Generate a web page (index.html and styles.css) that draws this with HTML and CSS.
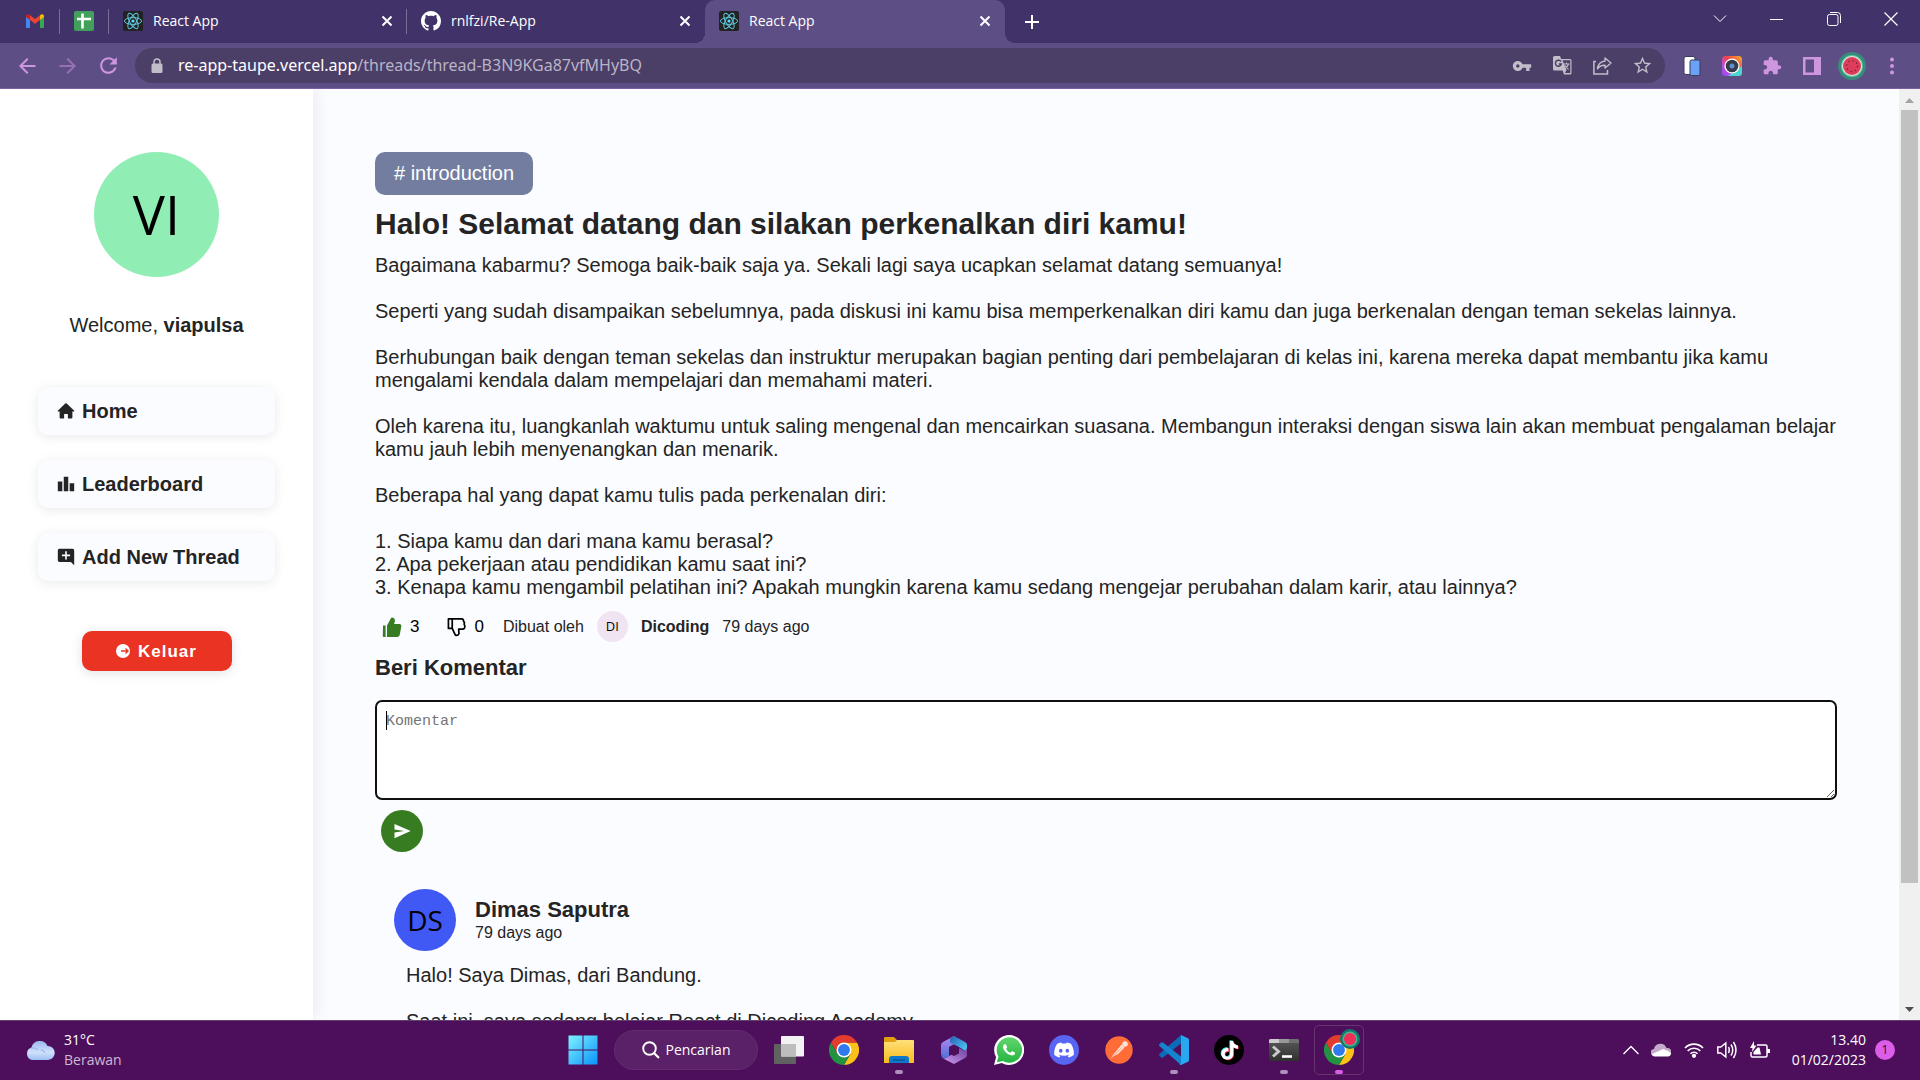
FILE: index.html
```html
<!DOCTYPE html>
<html lang="id">
<head>
<meta charset="utf-8">
<title>React App</title>
<link rel="stylesheet" href="styles.css">
</head>
<body>
<svg class="defs" aria-hidden="true">
  <defs>
    <symbol id="react" viewBox="0 0 20 20">
      <rect width="20" height="20" rx="2" fill="#222"/>
      <g fill="none" stroke="#61c5dc" stroke-width="1">
        <ellipse cx="10" cy="10" rx="8.6" ry="3.4"/>
        <ellipse cx="10" cy="10" rx="8.6" ry="3.4" transform="rotate(60 10 10)"/>
        <ellipse cx="10" cy="10" rx="8.6" ry="3.4" transform="rotate(120 10 10)"/>
      </g>
      <circle cx="10" cy="10" r="1.6" fill="#61dafb"/>
    </symbol>
    <symbol id="close" viewBox="0 0 16 16">
      <path d="M3.5 3.5l9 9M12.5 3.5l-9 9" stroke="#fff" stroke-width="2" fill="none"/>
    </symbol>
    <symbol id="chrome" viewBox="0 0 48 48">
      <path d="M24 12h20.8A24 24 0 0 1 24 48l10.4-18z" fill="#fbc116"/>
      <path d="M3.2 12A24 24 0 0 0 24 48l10.4-18L24 35 13.6 30z" fill="#229342"/>
      <path d="M3.2 12A24 24 0 0 1 44.8 12H24L13.6 30z" fill="#e33b2e"/>
      <circle cx="24" cy="24" r="12" fill="#fff"/>
      <circle cx="24" cy="24" r="9.5" fill="#2f7bee"/>
    </symbol>
    <symbol id="note" viewBox="0 0 24 24">
      <path d="M12.525.02c1.31-.02 2.61-.01 3.91-.02.08 1.53.63 3.09 1.75 4.17 1.12 1.11 2.7 1.62 4.24 1.79v4.03c-1.44-.05-2.89-.35-4.2-.97-.57-.26-1.1-.59-1.62-.93-.01 2.92.01 5.84-.02 8.75-.08 1.4-.54 2.79-1.35 3.94-1.31 1.92-3.58 3.17-5.91 3.21-1.43.08-2.86-.31-4.08-1.03-2.02-1.19-3.44-3.37-3.65-5.71-.02-.5-.03-1-.01-1.49.18-1.9 1.12-3.72 2.58-4.96 1.66-1.44 3.98-2.13 6.15-1.72.02 1.48-.04 2.96-.04 4.44-.99-.32-2.15-.23-3.02.37-.63.41-1.11 1.04-1.36 1.75-.21.51-.15 1.07-.14 1.61.24 1.64 1.82 3.02 3.5 2.87 1.12-.01 2.19-.66 2.77-1.61.19-.33.4-.67.41-1.06.1-1.79.06-3.57.07-5.36.01-4.03-.01-8.05.02-12.07z"/>
    </symbol>
    <linearGradient id="winBlue" x1="0" y1="0" x2="1" y2="1"><stop offset="0" stop-color="#7df4ff"/><stop offset="1" stop-color="#0a92fa"/></linearGradient>
    <linearGradient id="folder" x1="0" y1="0" x2="0" y2="1"><stop offset="0" stop-color="#ffe07a"/><stop offset="1" stop-color="#f9bb1c"/></linearGradient>
    <linearGradient id="wa" x1="0" y1="0" x2="0" y2="1"><stop offset="0" stop-color="#61d66d"/><stop offset="1" stop-color="#25b440"/></linearGradient>
    <linearGradient id="cloud" x1="0" y1="0" x2="0" y2="1"><stop offset="0" stop-color="#9db9f2"/><stop offset=".6" stop-color="#cfe0fb"/><stop offset="1" stop-color="#9dbff2"/></linearGradient>
    <linearGradient id="m1" x1="0" y1="0" x2="0" y2="1"><stop offset="0" stop-color="#b78af0"/><stop offset="1" stop-color="#4a6fd8"/></linearGradient>
    <linearGradient id="m2" x1="0" y1="0" x2="1" y2="1"><stop offset="0" stop-color="#2a5fb5"/><stop offset="1" stop-color="#4fd3fb"/></linearGradient>
    <linearGradient id="m3" x1="0" y1="1" x2="1" y2="0"><stop offset="0" stop-color="#cf9cf5"/><stop offset="1" stop-color="#6a3f98"/></linearGradient>
    <linearGradient id="term" x1="0" y1="0" x2="0" y2="1"><stop offset="0" stop-color="#5a5a5a"/><stop offset="1" stop-color="#303030"/></linearGradient>
    <linearGradient id="rain" x1="0" y1="1" x2="1" y2="0"><stop offset="0" stop-color="#8a4cf5"/><stop offset=".3" stop-color="#c44ce0"/><stop offset=".6" stop-color="#ef4444"/><stop offset="1" stop-color="#f7b52c"/></linearGradient>
  </defs>
</svg>

<header class="browser">
  <div class="tabstrip">
    <a class="tab tab-pinned" href="#" aria-label="Gmail">
      <svg width="18" height="14" viewBox="0 0 18 14"><path d="M0 2v11q0 1 1 1h3V5z" fill="#4285f4"/><path d="M18 2v11q0 1-1 1h-3V5z" fill="#34a853"/><path d="M14 1.200V6l4-3V1.500Q16.500-.6 14 1.200z" fill="#fbbc04"/><path d="M4 1.200V6L0 3V1.500Q1.500-.6 4 1.200z" fill="#c5221f"/><path d="M4 1.200L9 5l5-3.800V6L9 9.800 4 6z" fill="#ea4335"/></svg>
    </a>
    <a class="tab tab-pinned" href="#" aria-label="Spreadsheet">
      <svg width="20" height="20" viewBox="0 0 20 20"><rect width="20" height="20" rx="2" fill="#43a05a"/><path d="M8.500 2.500v15M3 8h14" stroke="#fff" stroke-width="2.600"/></svg>
    </a>
    <div class="tab">
      <svg width="20" height="20"><use href="#react"/></svg>
      <span class="tab-title">React App</span>
      <button class="tab-close" aria-label="Close tab"><svg width="16" height="16"><use href="#close"/></svg></button>
    </div>
    <div class="tab tab-before-active">
      <svg width="20" height="20" viewBox="0 0 16 16" fill="#fff"><path d="M8 0C3.580 0 0 3.580 0 8c0 3.540 2.290 6.530 5.470 7.590.4.070.550-.170.550-.380 0-.190-.010-.820-.010-1.490-2.010.370-2.530-.490-2.690-.940-.090-.230-.480-.940-.820-1.130-.280-.150-.680-.520-.010-.530.630-.010 1.080.580 1.230.820.720 1.210 1.870.870 2.330.660.070-.520.280-.870.510-1.070-1.780-.2-3.640-.890-3.640-3.950 0-.870.310-1.590.820-2.150-.080-.2-.360-1.020.080-2.120 0 0 .670-.210 2.200.820.640-.180 1.320-.270 2-.270s1.360.090 2 .270c1.530-1.040 2.200-.820 2.200-.820.440 1.100.160 1.920.080 2.120.510.560.820 1.270.820 2.150 0 3.070-1.870 3.750-3.650 3.950.290.250.540.730.540 1.480 0 1.070-.010 1.930-.010 2.200 0 .210.150.460.550.380A8.010 8.010 0 0 0 16 8c0-4.420-3.580-8-8-8z"/></svg>
      <span class="tab-title">rnlfzi/Re-App</span>
      <button class="tab-close" aria-label="Close tab"><svg width="16" height="16"><use href="#close"/></svg></button>
    </div>
    <div class="tab tab-active">
      <svg width="20" height="20"><use href="#react"/></svg>
      <span class="tab-title">React App</span>
      <button class="tab-close" aria-label="Close tab"><svg width="16" height="16"><use href="#close"/></svg></button>
    </div>
    <button class="new-tab" aria-label="New tab"><svg width="16" height="16" viewBox="0 0 16 16"><path d="M8 1v14M1 8h14" stroke="#fff" stroke-width="2"/></svg></button>
    <div class="window-controls">
      <button aria-label="Search tabs"><svg width="14" height="14" viewBox="0 0 14 14"><path d="M1 3.500l6 6 6-6" stroke="#fff" fill="none"/></svg></button>
      <button aria-label="Minimize"><svg width="14" height="14" viewBox="0 0 14 14"><path d="M0 7.500h13" stroke="#fff"/></svg></button>
      <button aria-label="Restore"><svg width="14" height="14" viewBox="0 0 14 14"><rect x=".5" y="2.500" width="10.500" height="11" rx="2" stroke="#fff" fill="none"/><path d="M3 .5h7.500q3 0 3 3V11" stroke="#fff" fill="none"/></svg></button>
      <button aria-label="Close"><svg width="14" height="14" viewBox="0 0 14 14"><path d="M.5.500l13 13M13.500.500l-13 13" stroke="#fff" stroke-width="1.200"/></svg></button>
    </div>
  </div>

  <div class="toolbar">
    <button class="nav-btn" aria-label="Back"><svg width="24" height="24" viewBox="0 0 24 24" fill="#cf96e0"><path d="M20.500 11H7.830l5.590-5.590L12 4l-8 8 8 8 1.410-1.410L7.830 13H20.500v-2z"/></svg></button>
    <button class="nav-btn nav-off" aria-label="Forward"><svg width="24" height="24" viewBox="0 0 24 24" fill="#cf96e0"><path d="M3.500 11h12.670l-5.590-5.590L12 4l8 8-8 8-1.410-1.410L16.170 13H3.500v-2z"/></svg></button>
    <button class="nav-btn" aria-label="Reload"><svg width="25" height="25" viewBox="0 0 24 24" fill="#cf96e0"><path d="M17.650 6.350C16.200 4.900 14.210 4 12 4c-4.420 0-7.990 3.580-7.990 8s3.570 8 7.990 8c3.730 0 6.840-2.550 7.730-6h-2.080c-.820 2.330-3.040 4-5.650 4-3.310 0-6-2.690-6-6s2.690-6 6-6c1.660 0 3.140.690 4.220 1.780L13 11h7V4l-2.350 2.350z"/></svg></button>
    <div class="omnibox">
      <svg width="12" height="15" viewBox="0 0 12 15"><path d="M3 6V4a3 3 0 0 1 6 0v2" stroke="#c1bdc9" stroke-width="1.500" fill="none"/><rect x=".5" y="5.500" width="11" height="9.500" rx="1.500" fill="#c1bdc9"/></svg>
      <div class="url" role="textbox" aria-label="Address" contenteditable="true" spellcheck="false"><span class="url-host">re-app-taupe.vercel.app</span>/threads/thread-B3N9KGa87vfMHyBQ</div>
      <button aria-label="Passwords"><svg width="20" height="20" viewBox="0 0 24 24" fill="#c1bdc9"><path d="M12.650 10C11.830 7.670 9.610 6 7 6c-3.310 0-6 2.690-6 6s2.690 6 6 6c2.610 0 4.830-1.670 5.650-4H17v4h4v-4h2v-4H12.650zM7 14c-1.100 0-2-.9-2-2s.9-2 2-2 2 .9 2 2-.9 2-2 2z"/></svg></button>
      <button aria-label="Translate"><svg width="19" height="19" viewBox="0 0 19 19"><path d="M1.500 0H7l1.200 3H17q1.500 0 1.500 1.500V17q0 1.500-1.500 1.500h-6L9.600 14.500H1.500Q0 14.500 0 13V1.500Q0 0 1.500 0z" fill="#c1bdc9"/><path d="M9.500 4.200H17.300V17H12l1.500-3z" fill="#4b3e67"/><path d="M8 5.700A3 3 0 1 0 8.300 8H5.800" fill="none" stroke="#4b3e67" stroke-width="1.400"/><path d="M10.500 8h6M13.500 6.500V8M15.500 8q-.8 3-4 5M12 9.500l3.500 4" fill="none" stroke="#c1bdc9" stroke-width="1.100"/></svg></button>
      <button aria-label="Share"><svg width="19" height="18" viewBox="0 0 19 18"><path d="M3 4.500H.9V17.100H14.500V13" fill="none" stroke="#c1bdc9" stroke-width="1.500"/><path d="M12 1l6 5-6 5V8.200Q7 8 4.500 12 5 5 12 4z" fill="none" stroke="#c1bdc9" stroke-width="1.400" stroke-linejoin="round"/></svg></button>
      <button aria-label="Bookmark"><svg width="21" height="21" viewBox="0 0 24 24" fill="#c1bdc9"><path d="M22 9.240l-7.190-.620L12 2 9.190 8.630 2 9.240l5.460 4.730L5.820 21 12 17.270 18.180 21l-1.630-7.030L22 9.240zM12 15.400l-3.760 2.270 1-4.280-3.320-2.880 4.380-.380L12 6.100l1.710 4.040 4.380.380-3.320 2.880 1 4.280L12 15.400z"/></svg></button>
    </div>
    <div class="extensions">
      <button aria-label="Responsive viewer"><svg width="18" height="20" viewBox="0 0 18 20"><rect x="1" y=".5" width="11" height="18" rx="2" fill="#fff" stroke="#3b3b5a"/><rect x="7" y="4" width="10" height="15.500" rx="1.500" fill="#6aa2f7" stroke="#3b3b5a"/></svg></button>
      <button aria-label="Screenshot"><svg width="20" height="20" viewBox="0 0 20 20"><rect width="20" height="20" rx="3.500" fill="url(#rain)"/><path d="M20 10v6.500Q20 20 16.500 20H6z" fill="#4cd6d0"/><circle cx="10" cy="10" r="7.600" fill="#fff"/><circle cx="10" cy="10" r="6.300" fill="#363b45"/><circle cx="10" cy="10" r="2.500" fill="#5d8fd0"/></svg></button>
      <button aria-label="Extensions"><svg width="20" height="20" viewBox="0 0 24 24" fill="#cf96e0"><path d="M20.500 11H19V7c0-1.100-.9-2-2-2h-4V3.500C13 2.120 11.880 1 10.500 1S8 2.120 8 3.500V5H4c-1.100 0-1.990.9-1.990 2v3.800H3.500c1.490 0 2.700 1.210 2.700 2.700s-1.210 2.700-2.700 2.700H2V20c0 1.100.9 2 2 2h3.800v-1.500c0-1.490 1.210-2.700 2.700-2.700 1.490 0 2.700 1.210 2.700 2.700V22H17c1.100 0 2-.9 2-2v-4h1.500c1.380 0 2.500-1.120 2.500-2.500S21.880 11 20.500 11z"/></svg></button>
      <button aria-label="Side panel"><svg width="18" height="18" viewBox="0 0 18 18"><path d="M0 0h18v18H0zM2.500 2.500v13H11v-13z" fill="#cf96e0" fill-rule="evenodd"/></svg></button>
      <button aria-label="Profile"><svg width="28" height="28" viewBox="0 0 28 28"><circle cx="14" cy="14" r="14" fill="#3a8a7c"/><circle cx="14" cy="14" r="11" fill="#57c9a4"/><circle cx="14" cy="14" r="10" fill="#f3e6d8"/><circle cx="14" cy="14" r="9" fill="#dc3d5c"/><circle cx="14" cy="14" r="5.500" fill="none" stroke="#6b2236" stroke-width="1.300" stroke-dasharray="1.300 3"/></svg></button>
      <button aria-label="Menu"><svg width="4" height="18" viewBox="0 0 4 18" fill="#cf96e0"><circle cx="2" cy="2.500" r="2"/><circle cx="2" cy="9" r="2"/><circle cx="2" cy="15.500" r="2"/></svg></button>
    </div>
  </div>
</header>

<div class="page">
  <aside class="sidebar">
    <div class="avatar avatar-lg">VI</div>
    <p class="welcome">Welcome, <strong>viapulsa</strong></p>
    <nav class="menu">
      <a href="#"><svg width="18" height="18" viewBox="0 0 24 24"><path d="M12 1.500q.6 0 1 .4l10 9.600q.6 1-.5 1H20.500V20.500q0 1.500-1.500 1.500H14.500v-6h-5v6H5q-1.500 0-1.500-1.500v-8H1.500q-1.100 0-.5-1L11 1.900q.4-.4 1-.4z"/></svg>Home</a>
      <a href="#"><svg width="18" height="18" viewBox="1 1 22 22"><path d="M7.500 21H2V9h5.500v12zm7.250-18h-5.500v18h5.500V3zM22 11h-5.500v10H22V11z"/></svg>Leaderboard</a>
      <a href="#"><svg width="18" height="18" viewBox="1 1 22 22"><path d="M22 4c0-1.100-.9-2-2-2H4c-1.100 0-2 .9-2 2v12c0 1.100.9 2 2 2h14l4 4V4zm-5 7h-4v4h-2v-4H7V9h4V5h2v4h4v2z"/></svg>Add New Thread</a>
    </nav>
    <button class="logout"><svg width="14" height="14" viewBox="0 0 14 14"><circle cx="7" cy="7" r="7" fill="#fff"/><path d="M5 7h7M9.500 4.500L12 7 9.500 9.500" stroke="#ea3323" stroke-width="1.400" fill="none"/></svg>Keluar</button>
  </aside>

  <main class="content">
    <span class="tag"># introduction</span>
    <h1>Halo! Selamat datang dan silakan perkenalkan diri kamu!</h1>
    <div class="body-text">
      <p>Bagaimana kabarmu? Semoga baik-baik saja ya. Sekali lagi saya ucapkan selamat datang semuanya!</p>
      <p>Seperti yang sudah disampaikan sebelumnya, pada diskusi ini kamu bisa memperkenalkan diri kamu dan juga berkenalan dengan teman sekelas lainnya.</p>
      <p>Berhubungan baik dengan teman sekelas dan instruktur merupakan bagian penting dari pembelajaran di kelas ini, karena mereka dapat membantu jika kamu mengalami kendala dalam mempelajari dan memahami materi.</p>
      <p>Oleh karena itu, luangkanlah waktumu untuk saling mengenal dan mencairkan suasana. Membangun interaksi dengan siswa lain akan membuat pengalaman belajar kamu jauh lebih menyenangkan dan menarik.</p>
      <p>Beberapa hal yang dapat kamu tulis pada perkenalan diri:</p>
      <p>1. Siapa kamu dan dari mana kamu berasal?<br>2. Apa pekerjaan atau pendidikan kamu saat ini?<br>3. Kenapa kamu mengambil pelatihan ini? Apakah mungkin karena kamu sedang mengejar perubahan dalam karir, atau lainnya?</p>
    </div>
    <div class="thread-meta">
      <div class="votes">
        <button class="vote"><svg width="20" height="20" viewBox="0 0 20 20" fill="#387c22"><path d="M1 8.500h2.600V20H1.500Q.8 20 .8 19z"/><path d="M5 8.500L8.400 2.200Q8.600.500 10.200.500q3.400.3 2.500 4.500l-.6 2H18q1.800.5 1.300 2.600l-1.600 8.300Q17.200 19.500 15.500 20H5z"/></svg>3</button>
        <button class="vote"><svg width="19" height="20" viewBox="0 0 20 20" fill="none" stroke="#000" stroke-width="1.800" stroke-linejoin="round"><path d="M1.500 1.500H15.500q2 .3 1.800 2l1 2-.2 1.700.8 2.300q-.2 2.500-2 2.800H12.300l.3 4.700q-.5 2-2.500 1.900-1.300 0-1.800-1.400L5.500 11.500h-4z"/><path d="M5.500 1.500v10"/></svg>0</button>
      </div>
      <span class="meta-text">Dibuat oleh</span>
      <span class="avatar avatar-sm">DI</span>
      <strong class="meta-text">Dicoding</strong>
      <span class="meta-text">79 days ago</span>
    </div>
    <form class="comment-form">
      <h2><label for="comment">Beri Komentar</label></h2>
      <div class="field">
        <textarea id="comment" placeholder="Komentar"></textarea>
        <span class="caret"></span>
      </div>
      <button class="send" type="button" aria-label="Kirim"><svg width="18" height="18" viewBox="0 0 24 24" fill="#fff"><path d="M2 21.500L23.500 12 2 2.500V10l13 2-13 2z"/></svg></button>
    </form>
    <article class="comment">
      <header class="comment-head">
        <div class="avatar avatar-md">DS</div>
        <div>
          <h3>Dimas Saputra</h3>
          <p class="meta-text">79 days ago</p>
        </div>
      </header>
      <div class="comment-body body-text">
        <p>Halo! Saya Dimas, dari Bandung.</p>
        <p>Saat ini, saya sedang belajar React di Dicoding Academy.</p>
      </div>
    </article>
  </main>

  <div class="scrollbar">
    <svg width="21" height="21" viewBox="0 0 21 21"><path d="M6 14l4.500-5 4.500 5z" fill="#a3a3a3"/></svg>
    <div class="scroll-track"><div class="scroll-thumb"></div></div>
    <svg width="21" height="21" viewBox="0 0 21 21"><path d="M6 8h9l-4.500 5z" fill="#505050"/></svg>
  </div>
</div>

<footer class="taskbar">
  <div class="weather">
    <svg width="30" height="20" viewBox="0 0 30 20"><path d="M7 20a6.500 6.500 0 0 1-.5-12.500A8.500 8.500 0 0 1 22.500 6 7 7 0 0 1 23 20z" fill="url(#cloud)"/><path d="M6 8q4-1 7 2M20 13q-1-3-4-3" stroke="#8fb0ea" fill="none"/></svg>
    <div><div>31°C</div><div class="weather-sub">Berawan</div></div>
  </div>
  <div class="apps">
    <button class="app" aria-label="Start"><svg width="30" height="30" viewBox="0 0 30 30" fill="url(#winBlue)"><path d="M.5.500h14v14H.5zM15.500.500h14v14h-14zM.5 15.500h14v14H.5zM15.500 15.500h14v14h-14z"/></svg></button>
    <button class="search"><svg width="18" height="18" viewBox="0 0 18 18"><circle cx="7.500" cy="7.500" r="6.300" stroke="#fff" stroke-width="1.900" fill="none"/><path d="M12 12l5 5" stroke="#fff" stroke-width="2.200"/></svg>Pencarian</button>
    <button class="app" aria-label="Task view"><svg width="30" height="28" viewBox="0 0 30 28"><rect y="8" width="22" height="20" rx="1" fill="#616161"/><rect x="7" width="23" height="20.500" rx="1" fill="#f2f2f2"/><rect x="7" y="8" width="15" height="12.500" fill="#bdbdbd"/></svg></button>
    <button class="app" aria-label="Chrome"><svg width="30" height="30"><use href="#chrome"/></svg></button>
    <button class="app running" aria-label="File Explorer"><svg width="30" height="28" viewBox="0 0 30 28"><path d="M0 2q0-1 1-1h9l3 3H28q2 0 2 2v6H0z" fill="#e0a010"/><path d="M0 6h11l2-2H29q1 0 1 1V27H0z" fill="url(#folder)"/><path d="M5 27v-4q0-3 3-3h14q3 0 3 3v4z" fill="#0f78c8"/><path d="M9 24h12" stroke="#0a4f94" stroke-width="1.300"/></svg></button>
    <button class="app" aria-label="Microsoft 365"><svg width="28" height="28" viewBox="0 0 28 28"><path d="M14 0L3 6q-2 1-2 3v9q0 3 3 5l5-3v-9l7-4z" fill="url(#m1)"/><path d="M10 2.500L14 0l11 6q2 1 2 3v7l-8-5-9-4.500z" fill="url(#m2)"/><path d="M27 12v7q0 2-2 3l-11 6L4 23l5-3 4-2 6-1v-5l6 3z" fill="url(#m3)"/><path d="M14 9l5 2.500v6L14 20l-5-2.500v-6z" fill="#4d0f5c"/></svg></button>
    <button class="app" aria-label="WhatsApp"><svg width="30" height="30" viewBox="0 0 30 30"><path d="M0 30l2.100-7.700A15 15 0 1 1 7.800 28z" fill="#fff"/><path d="M2.800 27.200l1.700-5.600A12.700 12.700 0 1 1 9 26z" fill="url(#wa)"/><path transform="translate(3 2.800)" fill="#fff" d="M17.472 14.382c-.297-.149-1.758-.867-2.030-.967-.273-.099-.471-.148-.670.150-.197.297-.767.966-.940 1.164-.173.199-.347.223-.644.075-.297-.150-1.255-.463-2.390-1.475-.883-.788-1.480-1.761-1.653-2.059-.173-.297-.018-.458.130-.606.134-.133.298-.347.446-.520.149-.174.198-.298.298-.497.099-.198.050-.371-.025-.520-.075-.149-.669-1.612-.916-2.207-.242-.579-.487-.5-.669-.510-.173-.008-.371-.010-.570-.010-.198 0-.520.074-.792.372-.272.297-1.040 1.016-1.040 2.479 0 1.462 1.065 2.875 1.213 3.074.149.198 2.096 3.200 5.077 4.487.709.306 1.262.489 1.694.625.712.227 1.360.195 1.871.118.571-.085 1.758-.719 2.006-1.413.248-.694.248-1.289.173-1.413-.074-.124-.272-.198-.570-.347"/></svg></button>
    <button class="app" aria-label="Discord"><svg width="30" height="30" viewBox="0 0 30 30"><circle cx="15" cy="15" r="15" fill="#5765f2"/><path transform="translate(5.200 5.200) scale(.82)" fill="#fff" d="M20.317 4.370a19.791 19.791 0 0 0-4.885-1.515.074.074 0 0 0-.079.037c-.211.375-.445.865-.608 1.250-1.845-.276-3.680-.276-5.487 0-.164-.393-.406-.874-.618-1.250a.077.077 0 0 0-.079-.037 19.736 19.736 0 0 0-4.885 1.515.070.070 0 0 0-.032.028C.533 9.046-.319 13.580.099 18.058a.082.082 0 0 0 .031.056c2.053 1.508 4.041 2.423 5.993 3.029a.078.078 0 0 0 .084-.028c.462-.630.873-1.295 1.226-1.994a.076.076 0 0 0-.042-.106c-.653-.248-1.274-.550-1.872-.892a.077.077 0 0 1-.008-.128c.126-.094.252-.192.372-.291a.074.074 0 0 1 .078-.011c3.928 1.793 8.180 1.793 12.061 0a.074.074 0 0 1 .079.010c.120.099.246.198.373.292a.077.077 0 0 1-.007.128 12.299 12.299 0 0 1-1.873.891.077.077 0 0 0-.041.107c.360.698.772 1.363 1.225 1.993a.076.076 0 0 0 .084.029c1.961-.607 3.950-1.522 6.002-3.029a.077.077 0 0 0 .031-.055c.500-5.177-.838-9.674-3.549-13.660a.061.061 0 0 0-.031-.029zM8.020 15.331c-1.183 0-2.157-1.086-2.157-2.419s.956-2.419 2.157-2.419c1.211 0 2.176 1.095 2.157 2.419 0 1.333-.956 2.419-2.157 2.419zm7.975 0c-1.183 0-2.157-1.086-2.157-2.419s.955-2.419 2.157-2.419c1.211 0 2.176 1.095 2.157 2.419 0 1.333-.946 2.419-2.157 2.419z"/></svg></button>
    <button class="app" aria-label="Postman"><svg width="28" height="28" viewBox="0 0 28 28"><circle cx="14" cy="14" r="13.700" fill="#ff6c37"/><path d="M16.500 8.500l3 3-6.500 6.500-5 2.500-2 2 1.500-3 3.500-4z" fill="#ffe3d7"/><circle cx="20" cy="8" r="2.800" fill="#ffe3d7"/><path d="M8 20.500l9-9" stroke="#ff6c37" stroke-width=".6"/></svg></button>
    <button class="app running" aria-label="Visual Studio Code"><svg width="30" height="30" viewBox="0 0 30 30"><path d="M22 0v8.500L4 22.500q-1 .5-1.800 0L.4 20.800q-.8-1 0-1.900z" fill="#0a6cb8"/><path d="M22 30v-8.500L4 7.500Q3 7 2.200 7.500L.4 9.200q-.8 1 0 1.900z" fill="#1484cf"/><path d="M22 0l7 3.300q1 .5 1 1.700v20q0 1.200-1 1.700L22 30q-1 0-1.500-.7L22 28z" fill="#28a8ee"/></svg></button>
    <button class="app" aria-label="TikTok"><svg width="30" height="30" viewBox="0 0 30 30"><circle cx="15" cy="15" r="15"/><use href="#note" x="5.500" y="5.200" width="19" height="19" fill="#25f4ee"/><use href="#note" x="6.900" y="6.400" width="19" height="19" fill="#fe2c55"/><use href="#note" x="6.200" y="5.800" width="19" height="19" fill="#fff"/></svg></button>
    <button class="app running" aria-label="Terminal"><svg width="30" height="22" viewBox="0 0 30 22"><rect width="30" height="22" rx="1.500" fill="url(#term)"/><path d="M0 4V1.500Q0 0 1.500 0H10v4z" fill="#ccc"/><path d="M10 0h10v4H10z" fill="#999"/><path d="M20 0h8.500Q30 0 30 1.500V4H20z" fill="#707070"/><path d="M4 7.500l5.500 5-5.500 5" stroke="#c9c9c9" stroke-width="3" fill="none"/><path d="M13 17.500h10" stroke="#fff" stroke-width="2.600"/></svg></button>
    <button class="app focused" aria-label="Chrome, React App"><svg width="36" height="36" viewBox="0 0 36 36"><svg y="6" width="30" height="30"><use href="#chrome"/></svg><circle cx="26" cy="10" r="10" fill="#11796c"/><circle cx="26" cy="10" r="7.500" fill="#49b591"/><circle cx="26" cy="10" r="6" fill="#ef2f58"/></svg></button>
  </div>
  <div class="tray">
    <button aria-label="Hidden icons"><svg width="16" height="10" viewBox="0 0 16 10"><path d="M.5 9L8 1.500 15.500 9" stroke="#fff" stroke-width="1.300" fill="none"/></svg></button>
    <div class="tray-icons">
      <svg width="20" height="14" viewBox="0 0 20 14"><path d="M3.500 13a3.500 3.500 0 0 1-.5-7A6.500 6.500 0 0 1 15.500 5 4 4 0 0 1 17 13z" fill="#c3aacb"/><path d="M3.500 13.500Q1.500 13.500 1 11L9 7.500l3-1.500q4 1 8 4-.5 3.500-3 3.500z" fill="#fff"/></svg>
      <svg width="20" height="16" viewBox="0 0 20 16" fill="none" stroke="#fff" stroke-width="1.600"><path d="M1 6a12.500 12.500 0 0 1 18 0M3.700 8.900a8.700 8.700 0 0 1 12.600 0M6.500 11.700a4.900 4.900 0 0 1 7 0"/><circle cx="10" cy="13.800" r="1.300" fill="#fff"/></svg>
      <svg width="20" height="18" viewBox="0 0 20 18" fill="none" stroke="#fff" stroke-width="1.500"><path d="M.8 6v6h3l5 4V2L3.800 6zM11.500 6q1.500 3 0 6M14 3.500q3.500 5.500 0 11M16.500 1q5 8 0 16"/></svg>
      <svg width="20" height="18" viewBox="0 0 20 18"><path d="M7 4h8.500q1.500 0 1.500 1.500v9q0 1.500-1.500 1.500h-13Q1 16 1 14.500V11" fill="none" stroke="#fff" stroke-width="1.500"/><path d="M17 8h3v4h-3zM9.500 6.500L11 13.500H3.500V11l4-4.500z" fill="#fff"/><path d="M4 0L0 7h2.500L2 11l4.500-6.500H4z" fill="#fff"/></svg>
    </div>
    <time class="clock" datetime="2023-02-01T13:40"><span>13.40</span><span>01/02/2023</span></time>
    <span class="notice">1</span>
  </div>
</footer>
</body>
</html>
```

FILE: styles.css
```css
* {
  box-sizing: border-box;
}

body {
  margin: 0;
  height: 100vh;
  display: flex;
  flex-direction: column;
  overflow: hidden;
  font-family: "Liberation Sans", Arial, sans-serif;
  font-size: 20px;
  line-height: 23px;
  color: #242424;
}

h1, h2, h3, p {
  margin: 0;
}

button {
  border: 0;
  padding: 0;
  background: none;
  font: inherit;
  color: inherit;
}

a {
  color: inherit;
  text-decoration: none;
}

svg {
  flex: none;
  display: block;
}

.defs {
  position: absolute;
  width: 0;
  height: 0;
}

/* Browser frame */
.browser {
  flex: none;
  font-family: "Open Sans", "Noto Sans", sans-serif;
  color: #fff;
}

.tabstrip {
  display: flex;
  height: 43px;
  padding: 0 1px 0 11px;
  background: #42326a;
}

.tab {
  position: relative;
  display: flex;
  align-items: center;
  flex: 0 1 298px;
  gap: 10px;
  padding: 0 12px 2px 14px;
  font-size: 14px;
}

.tab-pinned {
  flex: 0 0 49px;
  justify-content: center;
  padding: 0 2px 2px 0;
}

.tab::after {
  content: "";
  position: absolute;
  right: 0;
  top: 9px;
  width: 1px;
  height: 25px;
  background: #7a6f97;
}

.tab-title {
  flex: 1;
}

.tab-before-active::after {
  display: none;
}

.tab-active {
  flex-basis: 300px;
  border-radius: 10px 10px 0 0;
  background: #5d4e86;
}

.tab-active::before,
.tab-active::after {
  content: "";
  position: absolute;
  top: auto;
  bottom: 0;
  width: 10px;
  height: 10px;
  background: radial-gradient(circle at 0 0, #42326a 10px, #5d4e86 10px);
}

.tab-active::before {
  left: -10px;
}

.tab-active::after {
  right: -10px;
  background: radial-gradient(circle at 100% 0, #42326a 10px, #5d4e86 10px);
}

.new-tab {
  width: 54px;
  display: flex;
  align-items: center;
  justify-content: center;
}

.window-controls {
  display: flex;
  margin-left: auto;
}

.window-controls button {
  width: 57px;
  height: 37px;
  display: flex;
  align-items: center;
  justify-content: center;
}

.toolbar {
  display: flex;
  align-items: center;
  height: 46px;
  padding: 0 8px 0 6px;
  background: #5d4e86;
  border-bottom: 1px solid #7c5fa0;
}

.nav-btn,
.omnibox button,
.extensions button {
  width: 40px;
  height: 32px;
  display: flex;
  align-items: center;
  justify-content: center;
}

.nav-btn {
  width: 41px;
}

.nav-off {
  opacity: .5;
}

.omnibox {
  flex: 1;
  display: flex;
  align-items: center;
  height: 35px;
  margin: 0 7px 0 6px;
  padding: 0 3px 0 16px;
  border-radius: 18px;
  background: #4b3e67;
}

.url {
  flex: 1;
  margin-left: 15px;
  font-family: "Noto Sans", sans-serif;
  font-size: 16px;
  color: #b9b3c6;
}

.url-host {
  color: #fff;
}

.extensions {
  display: flex;
}

/* Web page */
.page {
  flex: 1;
  min-height: 0;
  display: flex;
  overflow: hidden;
  background: #fbfcff;
}

.sidebar {
  flex: none;
  width: 313px;
  display: flex;
  flex-direction: column;
  align-items: center;
  padding: 63px 38px 0;
  background: #fff;
  box-shadow: 0 0 18px rgba(0, 0, 0, .1);
}

.avatar {
  flex: none;
  display: flex;
  align-items: center;
  justify-content: center;
  border-radius: 50%;
  font-family: "Open Sans", "Noto Sans", sans-serif;
  color: #000;
}

.avatar-lg {
  width: 125px;
  height: 125px;
  background: #90eeb4;
  font-size: 54px;
}

.avatar-md {
  width: 62px;
  height: 62px;
  background: #4058f4;
  font-size: 28px;
}

.avatar-sm {
  width: 31px;
  height: 31px;
  background: #f0e4f2;
  font-size: 13px;
}

.welcome {
  margin-top: 37px;
}

.menu {
  align-self: stretch;
  display: flex;
  flex-direction: column;
  gap: 25px;
  margin-top: 50px;
}

.menu a {
  display: flex;
  align-items: center;
  gap: 7px;
  height: 48px;
  padding: 0 19px;
  border-radius: 10px;
  background: #fbfcff;
  box-shadow: 0 2px 12px rgba(0, 0, 0, .09);
  font-weight: bold;
  fill: #242424;
}

.logout {
  display: flex;
  align-items: center;
  justify-content: center;
  gap: 8px;
  width: 150px;
  height: 40px;
  margin-top: 50px;
  border-radius: 10px;
  background: #ea3323;
  box-shadow: 0 2px 12px rgba(0, 0, 0, .12);
  font-size: 17px;
  font-weight: bold;
  letter-spacing: 1px;
  color: #fff;
}

.content {
  flex: 1;
  min-width: 0;
  padding: 63px 62px 0;
}

.tag {
  display: inline-block;
  padding: 10px 19px;
  border-radius: 10px;
  background: #727d9f;
  color: #fff;
}

h1 {
  margin-top: 12px;
  font-size: 30px;
  line-height: 34px;
}

h1 + .body-text {
  margin-top: 13px;
}

.body-text {
  display: flex;
  flex-direction: column;
  gap: 23px;
}

.thread-meta {
  display: flex;
  align-items: center;
  gap: 13px;
  margin-top: 12px;
  padding-left: 7px;
}

.votes {
  display: flex;
  gap: 28px;
  margin-right: 6px;
}

.vote {
  display: flex;
  align-items: center;
  gap: 8px;
  font-size: 17px;
  color: #000;
}

.meta-text {
  font-size: 16px;
}

h2,
h3 {
  font-size: 22px;
  line-height: 26px;
}

.comment-form {
  margin-top: 13px;
}

.field {
  position: relative;
  margin-top: 19px;
}

textarea {
  display: block;
  width: 100%;
  height: 100px;
  padding: 11px 9px;
  border: 2px solid #101010;
  border-radius: 7px;
  background: #fff;
  outline: none;
  font-family: "Liberation Mono", monospace;
  font-size: 15px;
}

textarea::placeholder {
  color: #757575;
}

.caret {
  position: absolute;
  left: 11px;
  top: 11px;
  width: 1px;
  height: 19px;
  background: #000;
}

.send {
  display: flex;
  align-items: center;
  justify-content: center;
  width: 42px;
  height: 42px;
  margin: 10px 0 0 6px;
  border-radius: 50%;
  background: #387c22;
}

.comment {
  margin-top: 37px;
  padding-left: 19px;
}

.comment-head {
  display: flex;
  align-items: center;
  gap: 19px;
}

.comment-head .meta-text {
  line-height: 20px;
}

.comment-body {
  margin-top: 13px;
  padding-left: 12px;
}

.scrollbar {
  flex: none;
  width: 21px;
  display: flex;
  flex-direction: column;
  background: #f0f0f0;
}

.scroll-track {
  flex: 1;
  padding: 0 2px;
}

.scroll-thumb {
  height: 87%;
  background: #c1c1c1;
}

/* Desktop taskbar */
.taskbar {
  flex: none;
  display: grid;
  grid-template-columns: 1fr auto 1fr;
  align-items: center;
  height: 60px;
  padding: 0 0 2px 2px;
  border-top: 1px solid #65406f;
  background: #4d0f5c;
  font-family: "Open Sans", "Noto Sans", sans-serif;
  font-size: 14px;
  line-height: 20px;
  color: #fff;
}

.weather {
  display: flex;
  align-items: center;
  gap: 9px;
  padding-left: 23px;
}

.weather-sub {
  color: #cdb9d2;
}

.apps {
  display: flex;
  align-items: center;
  gap: 5px;
}

.app {
  position: relative;
  width: 50px;
  height: 50px;
  display: flex;
  align-items: center;
  justify-content: center;
}

.running::after,
.focused::after {
  content: "";
  position: absolute;
  bottom: 1px;
  left: 21px;
  width: 8px;
  height: 4px;
  border-radius: 2px;
  background: #b08fba;
}

.focused {
  border: 1px solid #67346f;
  border-radius: 5px;
}

.focused svg {
  margin: 0 0 6px 6px;
}

.focused::after {
  bottom: 0;
  left: 20px;
  background: #dc5ee8;
}

.search {
  display: flex;
  align-items: center;
  justify-content: center;
  gap: 6px;
  width: 144px;
  height: 40px;
  margin: 0 1px;
  border: 1px solid #612c6e;
  border-radius: 20px;
  background: #5a2068;
}

.tray {
  display: flex;
  align-items: center;
  justify-content: flex-end;
  gap: 12px;
  padding-right: 25px;
}

.tray-icons {
  display: flex;
  align-items: center;
  gap: 13px;
}

.clock {
  display: flex;
  flex-direction: column;
  width: 84px;
  margin-right: -3px;
  text-align: right;
}

.notice {
  width: 20px;
  height: 20px;
  border-radius: 50%;
  background: #dc5ee8;
  font-size: 12px;
  text-align: center;
  color: #2b0a33;
}
```
